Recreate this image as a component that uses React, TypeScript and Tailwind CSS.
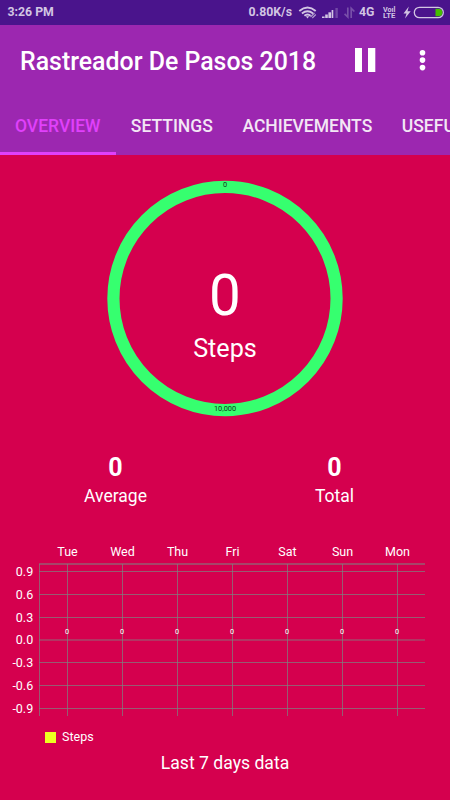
import React from "react";

const TABS = ["OVERVIEW", "SETTINGS", "ACHIEVEMENTS", "USEFUL"];

const DAYS = [
  { label: "Tue", x: 67, steps: 0 },
  { label: "Wed", x: 122, steps: 0 },
  { label: "Thu", x: 177, steps: 0 },
  { label: "Fri", x: 232, steps: 0 },
  { label: "Sat", x: 287, steps: 0 },
  { label: "Sun", x: 342, steps: 0 },
  { label: "Mon", x: 397, steps: 0 },
];

const LEVELS = [
  { label: "0.9", y: 31 },
  { label: "0.6", y: 54 },
  { label: "0.3", y: 77 },
  { label: "0.0", y: 99 },
  { label: "-0.3", y: 122 },
  { label: "-0.6", y: 145 },
  { label: "-0.9", y: 168 },
];

function StatusBar() {
  return (
    <div className="flex h-[25px] items-center bg-[#4a148c] pl-[7.5px] text-[#d2c5e3]">
      <span className="text-[12.3px] leading-[25px] font-bold">3:26 PM</span>
      <span className="ml-auto text-[12.3px] leading-[25px] font-bold">0.80K/s</span>
      <svg width="58" height="25" viewBox="298 0 58 25" className="ml-[6px] shrink-0" fill="none">
        <g stroke="currentColor" strokeWidth="1.9">
          <path d="M299.3 10.9 Q307.5 4.1 315.7 10.9" />
          <path d="M301.9 13.4 Q307.5 8.9 313.1 13.4" />
          <path d="M304.4 15.8 Q307.5 13.2 310.6 15.8" />
        </g>
        <path d="M305.8 16.2 L307.5 18.4 L309.2 16.2 Z" fill="currentColor" />
        <path d="M310.5 17 L314.5 13 M312.3 18 L315.8 14.5" stroke="currentColor" strokeWidth="1.2" opacity="0.75" />
        {/* signal strength, stepped triangle */}
        <g fill="currentColor">
          <rect x="322" y="16.5" width="2.6" height="1.5" />
          <rect x="325.2" y="14.5" width="2.6" height="3.5" />
          <rect x="328.4" y="12.3" width="2.6" height="5.7" />
          <rect x="331.6" y="10" width="1.4" height="8" />
          <rect x="333" y="10" width="1.2" height="8" opacity="0.3" />
          <rect x="335.4" y="8" width="2.4" height="10" opacity="0.3" />
        </g>
        <path d="M347.8 7.5 V17 L344.6 13.8 M351.2 18 V8.3 L354.4 11.5" stroke="currentColor" strokeWidth="1.7" opacity="0.34" />
      </svg>
      <span className="ml-[3px] w-[17px] text-[12.3px] leading-[25px] font-bold">4G</span>
      <svg width="13" height="25" viewBox="0 0 13 25" className="ml-[7px] shrink-0" fill="currentColor" fontSize="6.8" fontWeight="700">
        <text x="0" y="11.6" textLength="12.4" lengthAdjust="spacingAndGlyphs">Voıl</text>
        <text x="0" y="18" textLength="12.4" lengthAdjust="spacingAndGlyphs">LTE</text>
      </svg>
      <svg width="48" height="25" viewBox="402 0 48 25" className="ml-[6px] shrink-0" fill="none">
        <path d="M408.8 6.5 L403.5 13.4 H406.5 L405 18.4 L410.7 11.3 H407.5 Z" fill="currentColor" />
        <rect x="414.3" y="7.3" width="29" height="10.4" rx="5.2" stroke="currentColor" strokeWidth="1.3" />
        <path d="M435.5 8.8 H438.7 A3.7 3.7 0 0 1 438.7 16.2 H435.5 Z" fill="#45bf00" />
      </svg>
    </div>
  );
}

function StepRing() {
  return (
    <div className="relative mx-auto mt-[25px] h-[237px] w-[238px]">
      <svg width="238" height="237" viewBox="0 0 238 237">
        <circle cx="119" cy="118.5" r="111.6" fill="none" stroke="#36ff6f" strokeWidth="12.2" />
        <text x="119" y="7.2" textAnchor="middle" fontSize="7.4" fill="#12351c">0</text>
        <text x="119" y="230.5" textAnchor="middle" fontSize="7.4" fill="#12351c">10,000</text>
      </svg>
      {/* count sits in the middle of the ring */}
      <div className="absolute inset-0 flex flex-col items-center pt-[84px] text-white">
        <span className="text-[56.5px] leading-[64px]">0</span>
        <span className="mt-[6px] text-[25.2px] leading-[30px]">Steps</span>
      </div>
    </div>
  );
}

function Stat({ value, label }: { value: number; label: string }) {
  return (
    <div className="flex flex-col items-center text-white">
      <span className="text-[25px] leading-[30px] font-bold">{value}</span>
      <span className="mt-[2px] text-[17.5px] leading-[22px]">{label}</span>
    </div>
  );
}

function WeekChart() {
  return (
    <svg width="450" height="180" viewBox="0 0 450 180" className="block">
      <g fill="#808080">
        {LEVELS.map((l) => (
          <rect key={l.label} x="39" y={l.y} width="386" height={l.label === "0.0" ? 2 : 1} opacity={l.label === "0.0" ? 0.42 : 0.72} />
        ))}
        {DAYS.map((d) => (
          <rect key={d.label} x={d.x} y="24" width="1" height="152" opacity="0.72" />
        ))}
        <rect x="39" y="24" width="1" height="152" opacity="0.72" />
        <rect x="39" y="23" width="386" height="2" opacity="0.55" />
      </g>
      <g fill="#fff" fontSize="12.5">
        {DAYS.map((d) => (
          <text key={d.label} x={d.x + 0.5} y="16" textAnchor="middle">{d.label}</text>
        ))}
        {LEVELS.map((l) => (
          <text key={l.label} x="33.2" y={l.y + 4.6} textAnchor="end">{l.label}</text>
        ))}
      </g>
      <g fill="#fff" fontSize="7.4">
        {DAYS.map((d) => (
          <text key={d.label} x={d.x + 0.2} y="94.2" textAnchor="middle">{d.steps}</text>
        ))}
      </g>
    </svg>
  );
}

export default function App() {
  return (
    <div className="flex h-[800px] w-[450px] flex-col overflow-hidden bg-[#d5004e] font-[Roboto,sans-serif]">
      <StatusBar />

      {/* App bar */}
      <header className="h-[130px] bg-[#9c27b0]">
        <div className="flex h-[72px] items-center pl-5 text-white">
          <h1 className="pt-px text-[24.9px] leading-[30px] font-medium whitespace-nowrap">Rastreador De Pasos 2018</h1>
          <svg width="80" height="26" viewBox="0 0 80 26" className="mr-[20px] ml-auto shrink-0" fill="#fff">
            <rect x="5" y="0" width="7" height="24" />
            <rect x="18" y="0" width="7.3" height="24" />
            <circle cx="72.5" cy="4.7" r="2.8" />
            <circle cx="72.5" cy="12.1" r="2.8" />
            <circle cx="72.5" cy="19.6" r="2.8" />
          </svg>
        </div>
        <nav className="flex h-[58px] overflow-hidden text-[17.5px] font-medium whitespace-nowrap">
          {TABS.map((tab, i) => (
            <div
              key={tab}
              className={`h-[58px] shrink-0 leading-[58px] ${i === 0 ? "w-[116px] border-b-[3px] border-[#e040fb] pl-[15px] text-[#e040fb]" : "px-[14.8px] text-[#f3e6f5]"}`}
            >
              {tab}
            </div>
          ))}
        </nav>
      </header>

      <main>
        <StepRing />

        <div className="mt-[36px] grid grid-cols-[231px_207px] text-white">
          <Stat value={0} label="Average" />
          <Stat value={0} label="Total" />
        </div>

        <div className="mt-[33px]">
          <WeekChart />
        </div>

        <div className="mt-[9px] flex h-4 items-center pl-[45px] text-white">
          <span className="h-[11px] w-[11px] bg-[#eeff20]" />
          <span className="ml-[6px] text-[12.5px] leading-4">Steps</span>
        </div>
        <p className="mt-[7px] text-center text-[17.6px] leading-[22px] text-white">Last 7 days data</p>
      </main>
    </div>
  );
}
